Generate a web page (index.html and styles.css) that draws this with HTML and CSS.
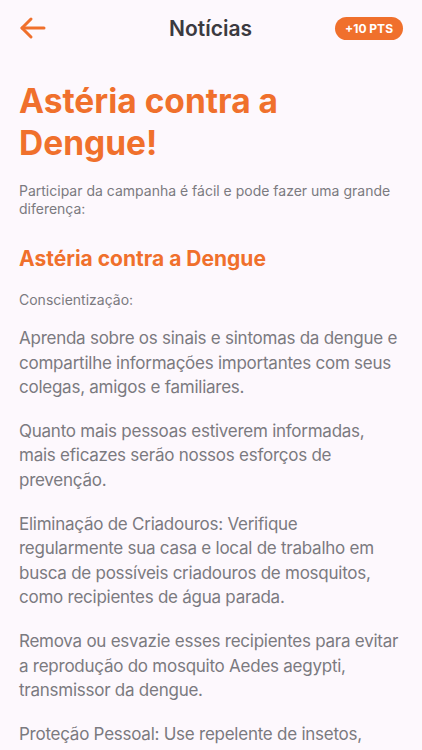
FILE: index.html
```html
<!DOCTYPE html>
<html lang="pt-BR">
<head>
  <meta charset="UTF-8">
  <meta name="viewport" content="width=device-width, initial-scale=1.0">
  <title>Notícias</title>
  <link rel="stylesheet" href="styles.css">
</head>
<body>
  <header class="topbar">
    <button class="back" aria-label="Voltar">
      <svg width="28" height="24" viewBox="0 0 28 24" fill="none" stroke="#f0702c" stroke-width="3" stroke-linecap="round" stroke-linejoin="round">
        <path d="M25 12H3"/>
        <path d="M12 3L3 12l9 9"/>
      </svg>
    </button>
    <h1 class="title">Notícias</h1>
    <span class="points">+10 PTS</span>
  </header>

  <main class="article">
    <h2 class="headline">Astéria contra a Dengue!</h2>
    <p class="intro">Participar da campanha é fácil e pode fazer uma grande diferença:</p>

    <h3 class="section-title">Astéria contra a Dengue</h3>
    <p class="label">Conscientização:</p>

    <p>Aprenda sobre os sinais e sintomas da dengue e compartilhe informações importantes com seus colegas, amigos e familiares.</p>
    <p>Quanto mais pessoas estiverem informadas, mais eficazes serão nossos esforços de prevenção.</p>
    <p>Eliminação de Criadouros: Verifique regularmente sua casa e local de trabalho em busca de possíveis criadouros de mosquitos, como recipientes de água parada.</p>
    <p>Remova ou esvazie esses recipientes para evitar a reprodução do mosquito Aedes aegypti, transmissor da dengue.</p>
    <p>Proteção Pessoal: Use repelente de insetos, roupas de manga longa e calças compridas, especialmente nos horários de maior atividade do mosquito.</p>
  </main>
</body>
</html>
```

FILE: styles.css
```css
/* Base */
body {
  font-family: Inter, "Noto Sans", sans-serif;
  margin: 0;
  padding: 0;
  background-color: #fdf8fd;
  color: #7b7a80;
}

/* Top bar */
.topbar {
  display: grid;
  grid-template-columns: 1fr auto 1fr;
  align-items: center;
  height: 56px;
  padding: 0 19px 0 18px;
}

.back {
  background: none;
  border: none;
  padding: 0;
  width: 30px;
  height: 24px;
  cursor: pointer;
}

.title {
  margin: 0;
  font-size: 21px;
  font-weight: 600;
  color: #3b3a40;
}

.points {
  justify-self: end;
  background-color: #f0702c;
  color: #fff;
  font-size: 12px;
  font-weight: 700;
  padding: 4px 10px;
  border-radius: 12px;
}

/* Article */
.article {
  padding: 0 19px;
}

.headline {
  margin: 24px 0 18px;
  font-size: 33.5px;
  line-height: 42px;
  font-weight: 700;
  color: #f0702c;
}

.section-title {
  margin: 0 0 20px;
  font-size: 21px;
  font-weight: 700;
  color: #f0702c;
}

.article p {
  font-size: 17px;
  line-height: 24.6px;
  letter-spacing: -0.25px;
  margin: 0 0 19px;
}

.article .intro,
.article .label {
  font-size: 14px;
  line-height: 18px;
  letter-spacing: 0;
}

.article .intro {
  margin-bottom: 28px;
}

.article .label {
  margin-bottom: 17px;
}
```
